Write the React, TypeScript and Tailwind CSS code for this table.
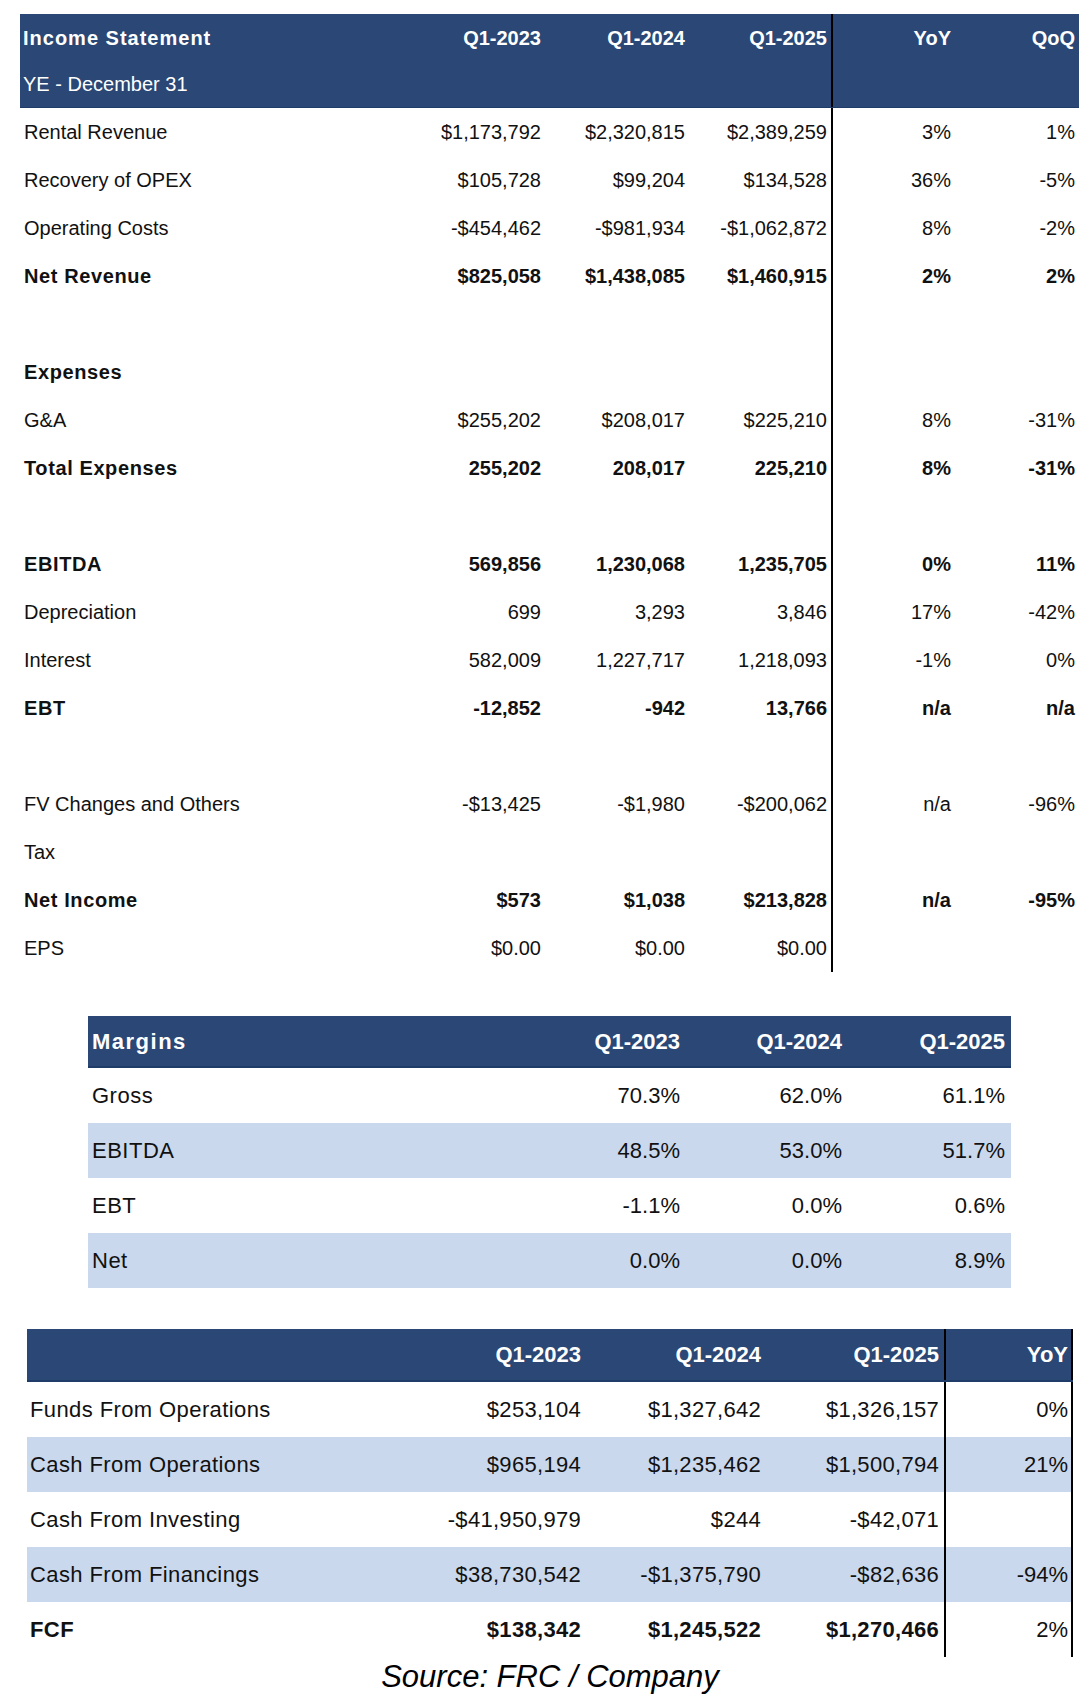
import React from "react";

type Row = { label: string; bold?: boolean; values?: string[] };

const incomeRows: Row[] = [
  { label: "Rental Revenue", values: ["$1,173,792", "$2,320,815", "$2,389,259", "3%", "1%"] },
  { label: "Recovery of OPEX", values: ["$105,728", "$99,204", "$134,528", "36%", "-5%"] },
  { label: "Operating Costs", values: ["-$454,462", "-$981,934", "-$1,062,872", "8%", "-2%"] },
  { label: "Net Revenue", bold: true, values: ["$825,058", "$1,438,085", "$1,460,915", "2%", "2%"] },
  { label: "" },
  { label: "Expenses", bold: true },
  { label: "G&A", values: ["$255,202", "$208,017", "$225,210", "8%", "-31%"] },
  { label: "Total Expenses", bold: true, values: ["255,202", "208,017", "225,210", "8%", "-31%"] },
  { label: "" },
  { label: "EBITDA", bold: true, values: ["569,856", "1,230,068", "1,235,705", "0%", "11%"] },
  { label: "Depreciation", values: ["699", "3,293", "3,846", "17%", "-42%"] },
  { label: "Interest", values: ["582,009", "1,227,717", "1,218,093", "-1%", "0%"] },
  { label: "EBT", bold: true, values: ["-12,852", "-942", "13,766", "n/a", "n/a"] },
  { label: "" },
  { label: "FV Changes and Others", values: ["-$13,425", "-$1,980", "-$200,062", "n/a", "-96%"] },
  { label: "Tax" },
  { label: "Net Income", bold: true, values: ["$573", "$1,038", "$213,828", "n/a", "-95%"] },
  { label: "EPS", values: ["$0.00", "$0.00", "$0.00", "", ""] },
];

const marginRows = [
  { label: "Gross", values: ["70.3%", "62.0%", "61.1%"] },
  { label: "EBITDA", values: ["48.5%", "53.0%", "51.7%"] },
  { label: "EBT", values: ["-1.1%", "0.0%", "0.6%"] },
  { label: "Net", values: ["0.0%", "0.0%", "8.9%"] },
];

const cashRows: Row[] = [
  { label: "Funds From Operations", values: ["$253,104", "$1,327,642", "$1,326,157", "0%"] },
  { label: "Cash From Operations", values: ["$965,194", "$1,235,462", "$1,500,794", "21%"] },
  { label: "Cash From Investing", values: ["-$41,950,979", "$244", "-$42,071", ""] },
  { label: "Cash From Financings", values: ["$38,730,542", "-$1,375,790", "-$82,636", "-94%"] },
  { label: "FCF", bold: true, values: ["$138,342", "$1,245,522", "$1,270,466", "2%"] },
];

const NAVY = "bg-[#2a4775]";

function IncomeStatement() {
  return (
    <div className="ml-[20px] mt-[14px] w-[1059px] text-[20px]">
      <div className={`${NAVY} border-b border-[#1f3b68] text-white`}>
        <div className="flex h-[47px] items-center font-bold">
          <div className="w-[380px] pl-[3px] tracking-[1px]">Income Statement</div>
          <div className="w-[145px] pr-[4px] text-right">Q1-2023</div>
          <div className="w-[144px] pr-[4px] text-right">Q1-2024</div>
          <div className="w-[142px] pr-[4px] text-right">Q1-2025</div>
          <div className="flex h-full w-[124px] items-center justify-end border-l-2 border-black pr-[4px]">YoY</div>
          <div className="w-[124px] pr-[4px] text-right">QoQ</div>
        </div>
        <div className="flex h-[46px] items-center">
          <div className="w-[380px] pl-[3px]">YE - December 31</div>
          <div className="w-[431px]" />
          <div className="h-full w-[124px] border-l-2 border-black" />
          <div className="w-[124px]" />
        </div>
      </div>
      {incomeRows.map((row, i) => (
        <div key={i} className={`flex h-[48px] items-center text-[#111] ${row.bold ? "font-bold" : ""}`}>
          <div className={`w-[380px] pl-[4px] ${row.bold ? "tracking-[0.6px]" : ""}`}>{row.label}</div>
          <div className="w-[145px] pr-[4px] text-right">{row.values?.[0]}</div>
          <div className="w-[144px] pr-[4px] text-right">{row.values?.[1]}</div>
          <div className="w-[142px] pr-[4px] text-right">{row.values?.[2]}</div>
          <div className="flex h-full w-[124px] items-center justify-end border-l-2 border-black pr-[4px]">
            {row.values?.[3]}
          </div>
          <div className="w-[124px] pr-[4px] text-right">{row.values?.[4]}</div>
        </div>
      ))}
    </div>
  );
}

function Margins() {
  return (
    <div className="ml-[88px] mt-[44px] w-[923px] text-[22px] text-[#111]">
      <div className={`${NAVY} flex h-[52px] items-center border-b-2 border-[#1f3b68] font-bold text-white`}>
        <div className="w-[442px] pl-[4px] tracking-[1.5px]">Margins</div>
        <div className="w-[154px] pr-[4px] text-right">Q1-2023</div>
        <div className="w-[162px] pr-[4px] text-right">Q1-2024</div>
        <div className="w-[165px] pr-[6px] text-right">Q1-2025</div>
      </div>
      {marginRows.map((row, i) => (
        <div key={row.label} className={`flex h-[55px] items-center ${i % 2 === 1 ? "bg-[#c9d8ed]" : ""}`}>
          <div className="w-[442px] pl-[4px] tracking-[0.5px]">{row.label}</div>
          <div className="w-[154px] pr-[4px] text-right">{row.values[0]}</div>
          <div className="w-[162px] pr-[4px] text-right">{row.values[1]}</div>
          <div className="w-[165px] pr-[6px] text-right">{row.values[2]}</div>
        </div>
      ))}
    </div>
  );
}

function CashFlow() {
  return (
    <div className="ml-[27px] mt-[41px] w-[1046px] text-[22px] text-[#111]">
      <div className={`${NAVY} flex h-[53px] items-center border-b-2 border-[#1f3b68] font-bold text-white`}>
        <div className="w-[393px]" />
        <div className="w-[165px] pr-[4px] text-right">Q1-2023</div>
        <div className="w-[180px] pr-[4px] text-right">Q1-2024</div>
        <div className="w-[179px] pr-[5px] text-right">Q1-2025</div>
        <div className="flex h-full w-[129px] items-center justify-end border-x-2 border-black pr-[3px]">YoY</div>
      </div>
      {cashRows.map((row, i) => (
        <div key={row.label} className={`flex h-[55px] items-center ${i % 2 === 1 ? "bg-[#c9d8ed]" : ""}`}>
          <div className={`w-[393px] pl-[3px] tracking-[0.4px] ${row.bold ? "font-bold" : ""}`}>{row.label}</div>
          <div className={`w-[165px] pr-[4px] text-right tracking-[0.3px] ${row.bold ? "font-bold" : ""}`}>
            {row.values?.[0]}
          </div>
          <div className={`w-[180px] pr-[4px] text-right tracking-[0.3px] ${row.bold ? "font-bold" : ""}`}>
            {row.values?.[1]}
          </div>
          <div className={`w-[179px] pr-[5px] text-right tracking-[0.3px] ${row.bold ? "font-bold" : ""}`}>
            {row.values?.[2]}
          </div>
          <div className="flex h-full w-[129px] items-center justify-end border-x-2 border-black pr-[3px]">
            {row.values?.[3]}
          </div>
        </div>
      ))}
    </div>
  );
}

export default function App() {
  return (
    <div className="min-h-[1704px] w-[1092px] bg-white font-['Liberation_Sans',Arial,sans-serif]">
      <IncomeStatement />
      <Margins />
      <CashFlow />
      <div className="mt-[2px] pl-[8px] text-center text-[31px] italic leading-[35px] text-black">
        Source: FRC / Company
      </div>
    </div>
  );
}
